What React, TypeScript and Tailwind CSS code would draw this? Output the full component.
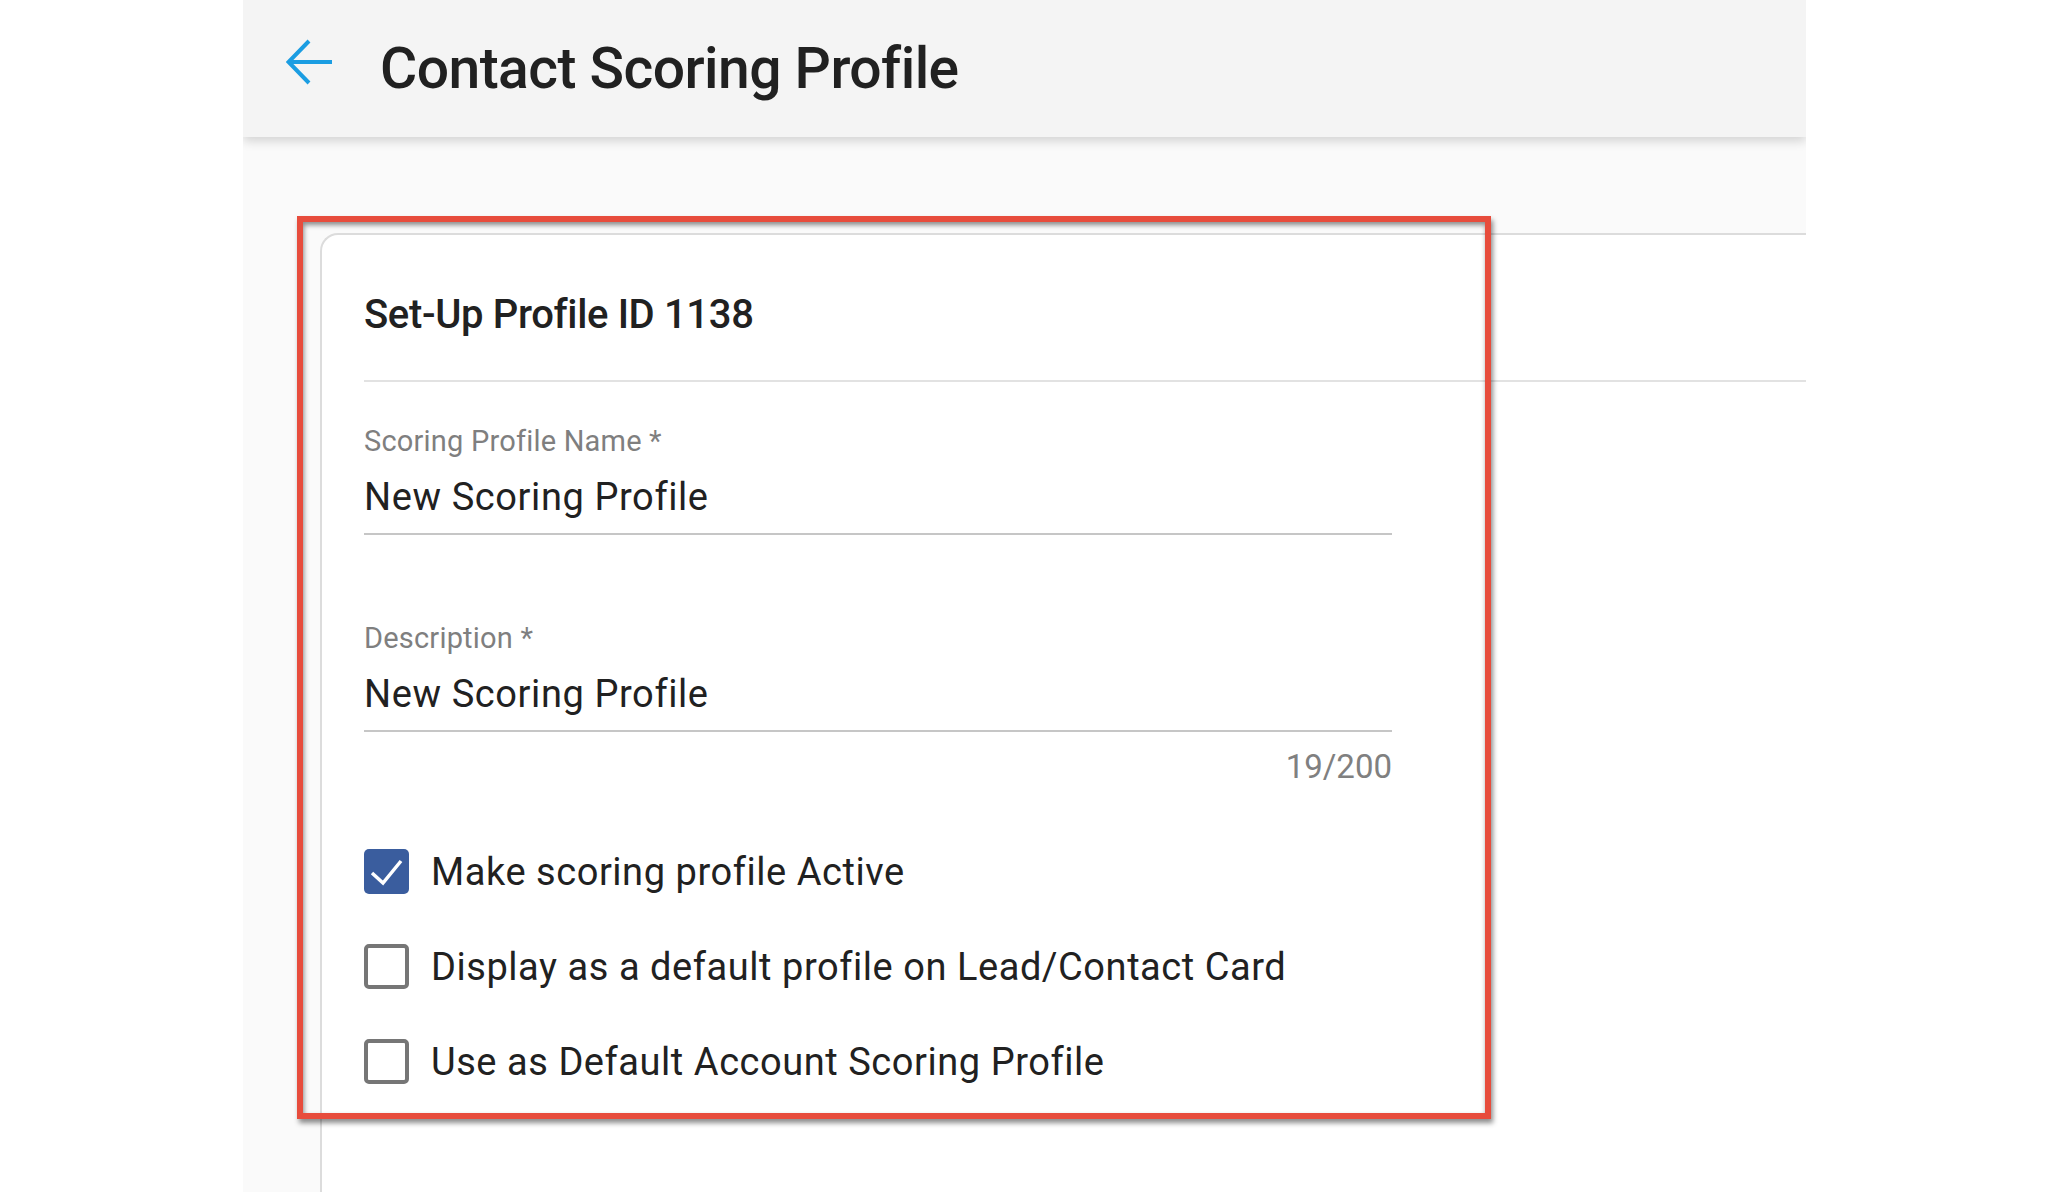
import React from "react";

const font = "font-['Roboto','Liberation_Sans',sans-serif]";

function BackArrow() {
  return (
    <svg width="46" height="46" viewBox="0 0 46 46" fill="none" className="mt-[39px] shrink-0">
      <path
        d="M23 2 L2.5 23 L23 44 M2.5 23 H46"
        stroke="#1b9de2"
        strokeWidth="4"
        strokeLinejoin="miter"
      />
    </svg>
  );
}

function Checkbox({ checked }: { checked: boolean }) {
  if (checked) {
    return (
      <div className="w-[45px] h-[45px] shrink-0 rounded-[5px] bg-[#3a5d9e] flex items-center justify-center">
        <svg width="45" height="45" viewBox="0 0 45 45" fill="none">
          <path d="M8 24 L19 34 L37 12" stroke="white" strokeWidth="3.5" />
        </svg>
      </div>
    );
  }
  return <div className="w-[45px] h-[45px] shrink-0 rounded-[5px] border-[4px] border-[#767676] bg-white" />;
}

function Field({ label, value, className }: { label: string; value: string; className?: string }) {
  return (
    <div className={className}>
      <div className="text-[29px] leading-[32px] tracking-[0.2px] text-[#7f7f7f]">{label}</div>
      <div className="mt-[18px] pb-[14px] border-b-2 border-[#c6c6c6] text-[38px] leading-[44px] tracking-[0.6px] text-[#212121]">
        {value}
      </div>
    </div>
  );
}

const options = [
  { label: "Make scoring profile Active", checked: true },
  { label: "Display as a default profile on Lead/Contact Card", checked: false },
  { label: "Use as Default Account Scoring Profile", checked: false },
];

export default function App() {
  return (
    <div className={`relative min-h-screen bg-white ${font}`}>
      <div className="ml-[243px] w-[1563px] h-[1192px] bg-[#fafafa] flex flex-col overflow-hidden">
        <header className="relative z-10 h-[137px] shrink-0 bg-[#f4f4f4] shadow-[0_4px_10px_rgba(0,0,0,0.16)] flex items-start pl-[43px] gap-[48px]">
          <BackArrow />
          <h1 className="mt-[36px] text-[57px] leading-[66px] font-medium text-[#212121] tracking-[-0.55px]">
            Contact Scoring Profile
          </h1>
        </header>

        <div className="mt-[96px] ml-[77px] flex-1 bg-white rounded-tl-[18px] border-t-2 border-l-2 border-[#dcdcdc]">
          <div className="pt-[56px] pl-[42px]">
            <h2 className="text-[40px] leading-[48px] font-medium tracking-[-0.35px] text-[#212121]">
              Set-Up Profile ID 1138
            </h2>
          </div>
          <div className="mt-[41px] ml-[42px] h-[2px] bg-[#e2e2e2]" />

          <div className="pl-[42px] w-[1070px]">
            <Field className="mt-[43px]" label="Scoring Profile Name *" value="New Scoring Profile" />
            <Field className="mt-[87px]" label="Description *" value="New Scoring Profile" />
            <div className="mt-[16px] text-right text-[33px] leading-[38px] text-[#808080]">19/200</div>

            <div className="mt-[63px] flex flex-col gap-[50px]">
              {options.map((o) => (
                <label key={o.label} className="flex items-center gap-[22px]">
                  <Checkbox checked={o.checked} />
                  <span className="text-[38px] leading-[44px] tracking-[0.55px] text-[#212121] whitespace-nowrap">
                    {o.label}
                  </span>
                </label>
              ))}
            </div>
          </div>
        </div>
      </div>

      {/* annotation box drawn over the card */}
      <div className="absolute left-[297px] top-[216px] w-[1194px] h-[903px] border-[6px] border-[#e74c3c] shadow-[2px_4px_5px_rgba(0,0,0,0.45),inset_1px_3px_5px_rgba(0,0,0,0.45)] pointer-events-none" />
    </div>
  );
}
